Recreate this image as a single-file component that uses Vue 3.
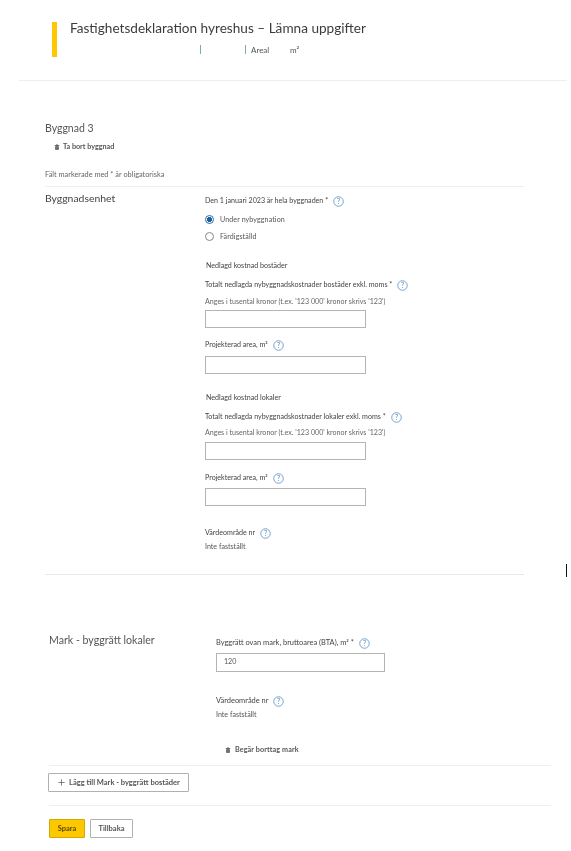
<script setup>
const Q = 'q'
</script>

<template>
  <div class="page">
    <header class="head">
      <div class="bar"></div>
      <div class="head-text">
        <h1>Fastighetsdeklaration hyreshus – Lämna uppgifter</h1>
        <div class="meta">
          <span class="sep first"></span>
          <span class="sep second"></span>
          <span class="areal">Areal</span>
          <span class="m2">m²</span>
        </div>
      </div>
    </header>

    <main class="main">
      <h2 class="building">Byggnad 3</h2>
      <div class="remove">
        <svg class="trash" viewBox="0 0 12 12"><path d="M4.5 1.5h3M1.5 3h9" fill="none" stroke="#333" stroke-width="1.4"/><path d="M2.5 4.5h7v7h-7z" fill="#444"/><path d="M5 6v4M7 6v4" stroke="#bbb" stroke-width=".8"/></svg>
        <span>Ta bort byggnad</span>
      </div>
      <p class="req">Fält markerade med * är obligatoriska</p>

      <section class="unit">
        <h2 class="unit-title">Byggnadsenhet</h2>
        <div class="fields">
          <div class="lbl">Den 1 januari 2023 är hela byggnaden * <svg class="help" viewBox="0 0 12 12"><circle cx="6" cy="6" r="5.2" fill="none" stroke="#6b9bcb"/><text x="6" y="8.6" text-anchor="middle" font-size="7.5" fill="#4a7fb5">?</text></svg></div>
          <label class="radio r1"><span class="dot on"></span>Under nybyggnation</label>
          <label class="radio r2"><span class="dot"></span>Färdigställd</label>

          <div class="group">Nedlagd kostnad bostäder</div>
          <div class="lbl l-total">Totalt nedlagda nybyggnadskostnader bostäder exkl. moms * <svg class="help" viewBox="0 0 12 12"><circle cx="6" cy="6" r="5.2" fill="none" stroke="#6b9bcb"/><text x="6" y="8.6" text-anchor="middle" font-size="7.5" fill="#4a7fb5">?</text></svg></div>
          <div class="hint">Anges i tusental kronor (t.ex. '123 000' kronor skrivs '123')</div>
          <div class="input i-first"></div>
          <div class="lbl l-area">Projekterad area, m² <svg class="help" viewBox="0 0 12 12"><circle cx="6" cy="6" r="5.2" fill="none" stroke="#6b9bcb"/><text x="6" y="8.6" text-anchor="middle" font-size="7.5" fill="#4a7fb5">?</text></svg></div>
          <div class="input i-area"></div>

          <div class="group g2">Nedlagd kostnad lokaler</div>
          <div class="lbl l-total">Totalt nedlagda nybyggnadskostnader lokaler exkl. moms * <svg class="help" viewBox="0 0 12 12"><circle cx="6" cy="6" r="5.2" fill="none" stroke="#6b9bcb"/><text x="6" y="8.6" text-anchor="middle" font-size="7.5" fill="#4a7fb5">?</text></svg></div>
          <div class="hint h2">Anges i tusental kronor (t.ex. '123 000' kronor skrivs '123')</div>
          <div class="input i-second"></div>
          <div class="lbl l-area2">Projekterad area, m² <svg class="help" viewBox="0 0 12 12"><circle cx="6" cy="6" r="5.2" fill="none" stroke="#6b9bcb"/><text x="6" y="8.6" text-anchor="middle" font-size="7.5" fill="#4a7fb5">?</text></svg></div>
          <div class="input i-area2"></div>

          <div class="lbl l-val">Värdeområde nr <svg class="help" viewBox="0 0 12 12"><circle cx="6" cy="6" r="5.2" fill="none" stroke="#6b9bcb"/><text x="6" y="8.6" text-anchor="middle" font-size="7.5" fill="#4a7fb5">?</text></svg></div>
          <div class="plain">Inte fastställt</div>
        </div>
      </section>

      <section class="mark">
        <h2 class="mark-title">Mark - byggrätt lokaler</h2>
        <div class="mark-fields">
          <div class="lbl big">Byggrätt ovan mark, bruttoarea (BTA), m² * <svg class="help" viewBox="0 0 12 12"><circle cx="6" cy="6" r="5.2" fill="none" stroke="#6b9bcb"/><text x="6" y="8.6" text-anchor="middle" font-size="7.5" fill="#4a7fb5">?</text></svg></div>
          <div class="input i-mark">120</div>
          <div class="lbl big l-val2">Värdeområde nr <svg class="help" viewBox="0 0 12 12"><circle cx="6" cy="6" r="5.2" fill="none" stroke="#6b9bcb"/><text x="6" y="8.6" text-anchor="middle" font-size="7.5" fill="#4a7fb5">?</text></svg></div>
          <div class="plain">Inte fastställt</div>
          <div class="remove r-mark">
            <svg class="trash" viewBox="0 0 12 12"><path d="M4.5 1.5h3M1.5 3h9" fill="none" stroke="#333" stroke-width="1.4"/><path d="M2.5 4.5h7v7h-7z" fill="#444"/><path d="M5 6v4M7 6v4" stroke="#bbb" stroke-width=".8"/></svg>
            <span>Begär borttag mark</span>
          </div>
        </div>
      </section>

      <div class="add-row">
        <button class="btn add"><svg class="plus" viewBox="0 0 10 10"><path d="M5 .5v9M.5 5h9" stroke="#555" fill="none"/></svg>Lägg till Mark - byggrätt bostäder</button>
      </div>
      <div class="actions">
        <button class="btn save">Spara</button>
        <button class="btn back">Tillbaka</button>
      </div>
    </main>
    <div class="caret"></div>
  </div>
</template>

<style>
html, body { margin: 0; background: #fff; }
</style>

<style scoped>
.page { position: relative; width: 571px; height: 851px; overflow: hidden; background: #fff; font-family: Lato, "Open Sans", sans-serif; color: #444; box-sizing: border-box; filter: blur(0.3px); }
h1, h2, p { margin: 0; font-weight: 400; }
.head { display: flex; width: 515px; margin-left: 19px; padding: 22px 0 23px 33px; border-bottom: 1px solid #eee; height: 35px; }
.bar { width: 5px; height: 35px; background: #fdc800; }
.head-text { margin-left: 13px; margin-top: -1.5px; }
h1 { font-size: 13.6px; line-height: 15px; color: #3c3c3c; white-space: nowrap; }
.meta { position: relative; height: 12px; margin-top: 8.5px; font-size: 8px; line-height: 12px; color: #555; }
.sep { position: absolute; top: 1px; width: 1px; height: 9px; background: #7fa9bb; }
.first { left: 130px; }
.second { left: 175px; }
.areal { position: absolute; left: 181px; }
.m2 { position: absolute; left: 220px; }
.main { padding: 0 0 0 45px; }
.building { margin-top: 40px; font-size: 10.5px; line-height: 14px; color: #555; }
.remove { display: flex; align-items: center; gap: 3px; margin: 7px 0 0 9px; font-size: 7.2px; line-height: 10px; font-weight: 700; color: #555; }
.trash { width: 6px; height: 6px; }
.req { margin-top: 18px; font-size: 7.35px; line-height: 10px; color: #666; }
.unit { display: flex; width: 479px; margin-top: 6px; padding-top: 3px; border-top: 1px solid #eee; border-bottom: 1px solid #e8e8e8; height: 384px; }
.unit-title { width: 160px; padding-top: 1px; font-size: 10.4px; line-height: 14px; color: #444; }
.lbl { display: flex; align-items: center; gap: 3px; font-size: 7.1px; line-height: 12px; color: #444; white-space: pre; }
.lbl.big { font-size: 7.45px; }
.help { width: 11px; height: 11px; }
.fields { padding-top: 5px; }
.radio { display: flex; align-items: center; gap: 6px; margin-top: 6.5px; font-size: 7.1px; line-height: 11px; color: #555; letter-spacing: 0.1px; }
.r2 { margin-top: 6px; }
.dot { box-sizing: border-box; width: 9px; height: 9px; border: 1px solid #888; border-radius: 50%; background: #fff; }
.dot.on { border-color: #2a6ca8; background: radial-gradient(circle, #1f5f9f 0 2.4px, #fff 2.8px); }
.group { margin-top: 18.5px; margin-left: 1px; font-size: 7.1px; line-height: 12px; color: #444; }
.g2 { margin-top: 18px; }
.l-total { margin-top: 7px; }
.hint { margin-top: 6px; font-size: 7.1px; line-height: 10px; color: #666; }
.h2 { margin-top: 5px; }
.input { box-sizing: border-box; width: 161px; height: 18px; border: 1.5px solid #b4b4b4; background: #fff; }
.i-first { margin-top: 3px; }
.i-second { margin-top: 4px; }
.l-area { margin-top: 11px; }
.i-area { margin-top: 5px; }
.l-area2 { margin-top: 12px; }
.i-area2 { margin-top: 4px; }
.l-val { margin-top: 21px; }
.plain { margin-top: 3px; font-size: 7.1px; line-height: 10px; color: #555; }
.mark { display: flex; margin-top: 58px; margin-left: 4px; height: 132px; }
.mark-title { width: 167px; font-size: 10.6px; line-height: 14px; color: #555; }
.mark-fields { padding-top: 4px; }
.i-mark { width: 169px; height: 19px; margin-top: 4px; padding-left: 7px; font-size: 7.1px; line-height: 16px; color: #555; }
.l-val2 { margin-top: 23px; }
.r-mark { margin: 25px 0 0 9px; gap: 4px; letter-spacing: 0.1px; }
.add-row { width: 502px; margin-left: 4px; padding: 7px 0 13px; border-top: 1px solid #eee; border-bottom: 1px solid #eee; }
.btn { box-sizing: border-box; font-family: inherit; font-size: 7.5px; font-weight: 700; color: #555; border: 1.5px solid #b0b0b0; border-radius: 1px; background: #fff; padding: 0; }
.add { display: flex; align-items: center; gap: 4px; width: 141px; height: 19px; margin-left: -1px; padding-left: 9px; }
.plus { width: 7px; height: 7px; }
.actions { display: flex; gap: 5px; margin: 13px 0 0 4px; }
.save { width: 36px; height: 19px; background: #fdc800; border-color: #d3a900; color: #5a4a00; }
.back { width: 43px; height: 19px; }
.caret { position: absolute; left: 566px; top: 564px; width: 1px; height: 13px; background: #111; }
</style>
